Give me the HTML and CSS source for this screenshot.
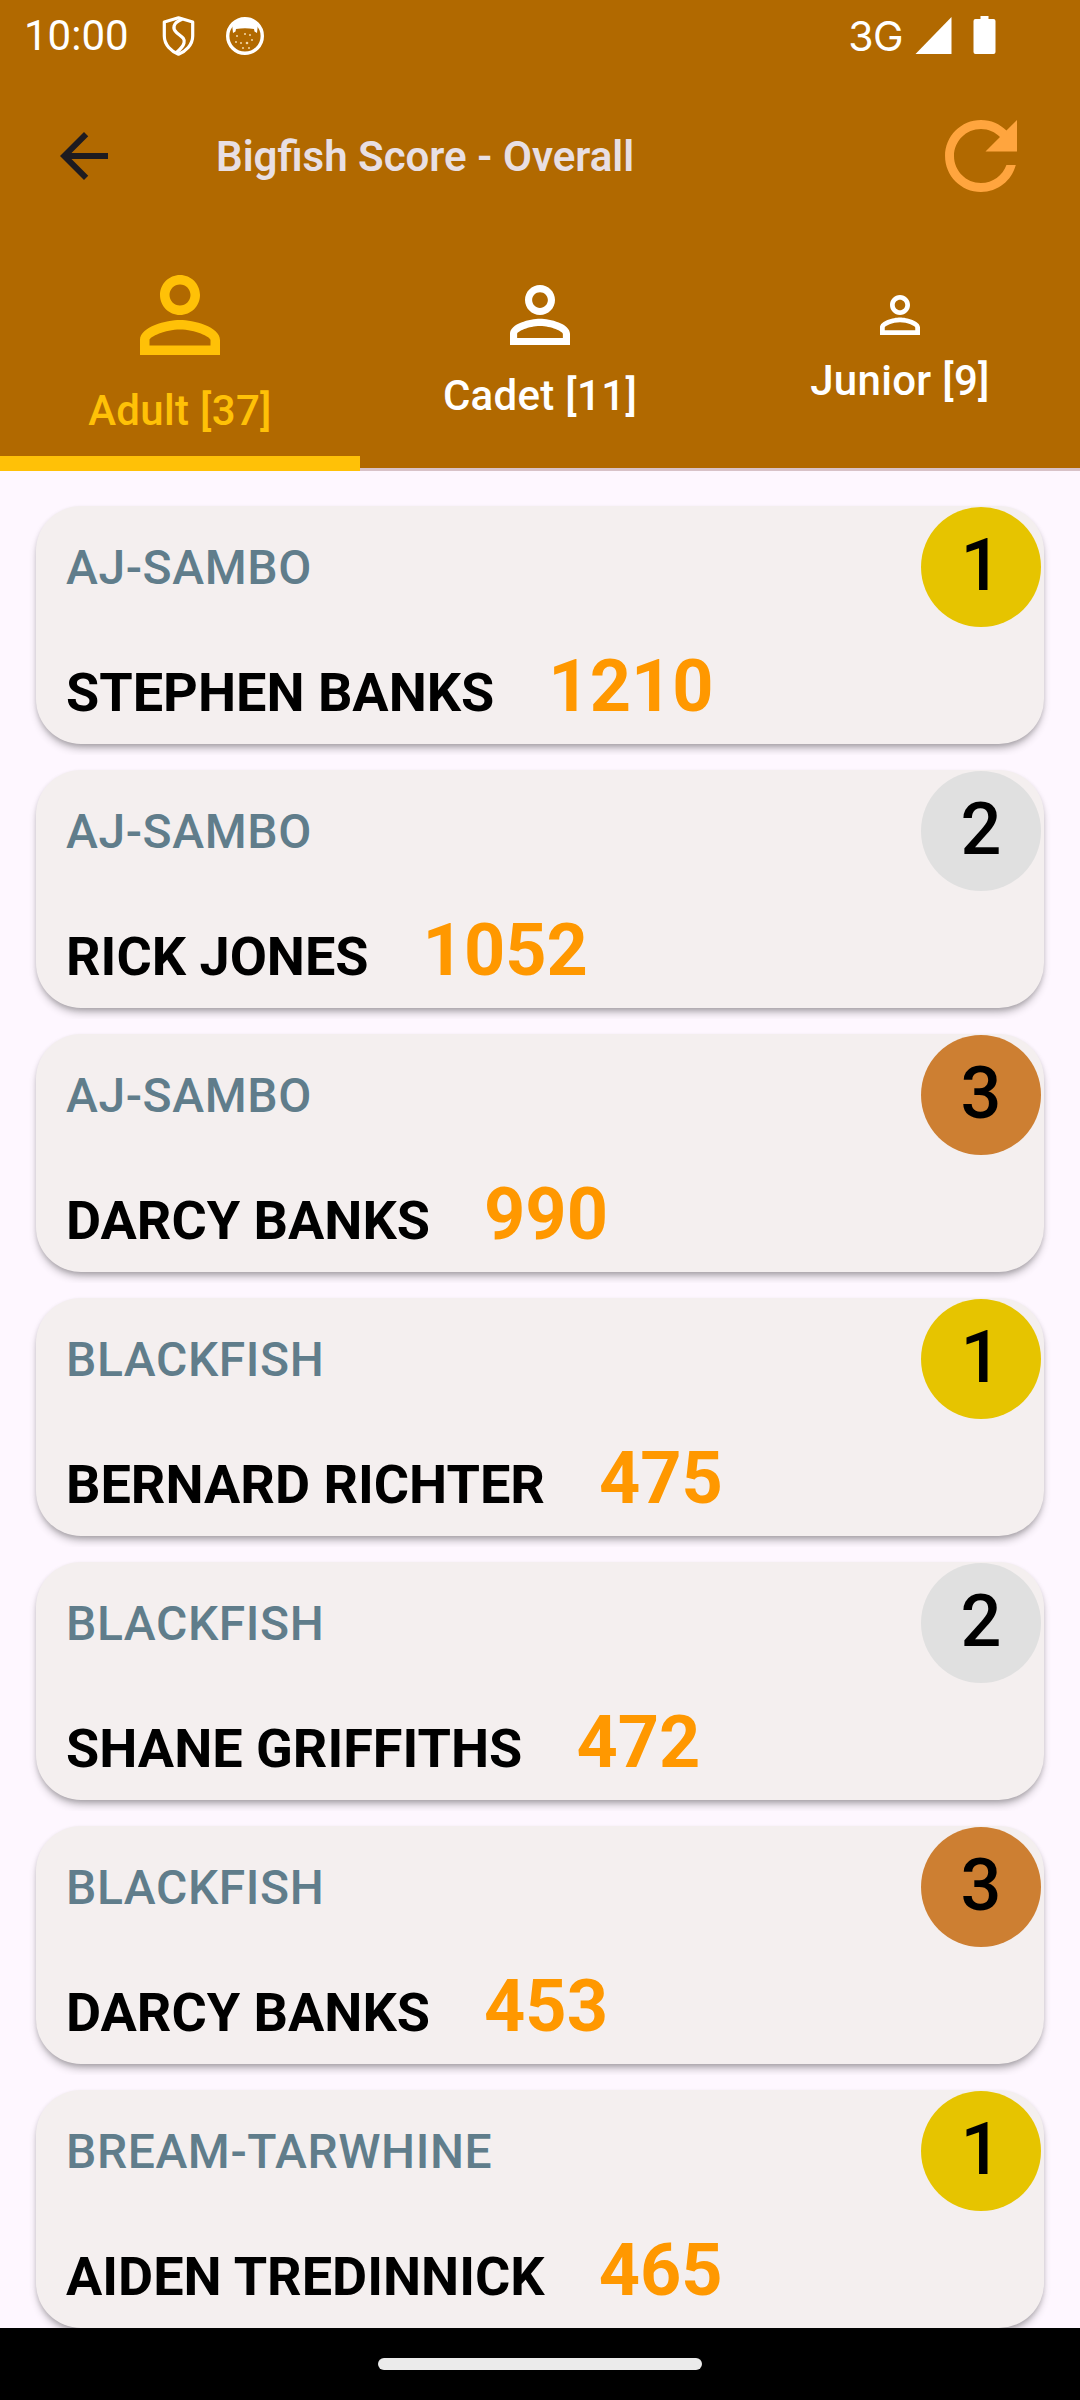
FILE: index.html
```html
<!DOCTYPE html>
<html lang="en">
<head>
<meta charset="utf-8">
<title>Bigfish Score - Overall</title>
<link rel="stylesheet" href="styles.css">
</head>
<body>
<div class="app">
  <header class="header">
    <div class="status-bar">
      <span class="clock">10:00</span>
      <svg class="ic-shield" viewBox="0 0 32 40"><path d="M16 1.8 L30.2 6 V20 C30.2 29 23 35.5 16 38.2 C9 35.5 1.8 29 1.8 20 V6 Z" fill="none" stroke="#fff" stroke-width="3.2" stroke-linejoin="round"/><path d="M19 3.5 C10 7 10 13 14 16.5 C18 20 23 22 21.5 27 C20.5 31 17 34 14 36.5" fill="none" stroke="#fff" stroke-width="3.2" stroke-linecap="round"/></svg>
      <svg class="ic-cat" viewBox="0 0 38 38"><circle cx="19" cy="19" r="17.3" fill="none" stroke="#fff" stroke-width="3.4"/><path d="M6 7 C10 1 28 1 32 7 L31 16 L28.5 14.5 L28 12 C22 11 16 11 10 12 L9.5 14.5 L7 16 Z" fill="#fff"/><g fill="#f3d9a8"><circle cx="11" cy="19" r="1"/><circle cx="19" cy="17" r="1"/><circle cx="24" cy="18" r="1"/><circle cx="10" cy="25" r="1"/><circle cx="15" cy="26" r="1"/><circle cx="21" cy="26" r="1.3"/><circle cx="26" cy="23" r="1"/><circle cx="17" cy="31" r="1"/><circle cx="23" cy="31" r="1"/></g></svg>
      <span class="status-spacer"></span>
      <span class="net">3G</span>
      <svg class="ic-signal" viewBox="0 0 36 37"><path d="M36 0V37H0Z" fill="#fff"/></svg>
      <svg class="ic-battery" viewBox="0 0 22 38"><path d="M7 0H15V3H20A2 2 0 0 1 22 5V36A2 2 0 0 1 20 38H2A2 2 0 0 1 0 36V5A2 2 0 0 1 2 3H7Z" fill="#fff"/></svg>
    </div>
    <div class="app-bar">
      <svg class="ic-back" viewBox="0 0 24 24"><path d="M20 11H7.83l5.59-5.59L12 4l-8 8 8 8 1.41-1.41L7.83 13H20v-2z"/></svg>
      <h1 class="title">Bigfish Score - Overall</h1>
      <svg class="ic-refresh" viewBox="0 0 24 24"><path d="M17.65 6.35C16.2 4.9 14.21 4 12 4c-4.42 0-7.99 3.58-7.99 8s3.57 8 7.99 8c3.73 0 6.84-2.55 7.73-6h-2.08c-.82 2.33-3.04 4-5.65 4-3.31 0-6-2.69-6-6s2.69-6 6-6c1.66 0 3.14.69 4.22 1.78L13 11h7V4l-2.35 2.35z"/></svg>
    </div>
    <nav class="tabs">
      <div class="tab tab-active">
        <svg class="ic-person size-l" viewBox="0 0 24 24"><path d="M12 5.9c1.16 0 2.1.94 2.1 2.1s-.94 2.1-2.1 2.1S9.9 9.16 9.9 8s.94-2.1 2.1-2.1m0 9c2.97 0 6.1 1.46 6.1 2.1v1.1H5.9V17c0-.64 3.13-2.1 6.1-2.1M12 4C9.79 4 8 5.79 8 8s1.79 4 4 4 4-1.79 4-4-1.79-4-4-4zm0 9c-2.67 0-8 1.34-8 4v3h16v-3c0-2.66-5.33-4-8-4z"/></svg>
        <span class="tab-label">Adult [37]</span>
      </div>
      <div class="tab">
        <svg class="ic-person size-m" viewBox="0 0 24 24"><path d="M12 5.9c1.16 0 2.1.94 2.1 2.1s-.94 2.1-2.1 2.1S9.9 9.16 9.9 8s.94-2.1 2.1-2.1m0 9c2.97 0 6.1 1.46 6.1 2.1v1.1H5.9V17c0-.64 3.13-2.1 6.1-2.1M12 4C9.79 4 8 5.79 8 8s1.79 4 4 4 4-1.79 4-4-1.79-4-4-4zm0 9c-2.67 0-8 1.34-8 4v3h16v-3c0-2.66-5.33-4-8-4z"/></svg>
        <span class="tab-label">Cadet [11]</span>
      </div>
      <div class="tab">
        <svg class="ic-person size-s" viewBox="0 0 24 24"><path d="M12 5.9c1.16 0 2.1.94 2.1 2.1s-.94 2.1-2.1 2.1S9.9 9.16 9.9 8s.94-2.1 2.1-2.1m0 9c2.97 0 6.1 1.46 6.1 2.1v1.1H5.9V17c0-.64 3.13-2.1 6.1-2.1M12 4C9.79 4 8 5.79 8 8s1.79 4 4 4 4-1.79 4-4-1.79-4-4-4zm0 9c-2.67 0-8 1.34-8 4v3h16v-3c0-2.66-5.33-4-8-4z"/></svg>
        <span class="tab-label">Junior [9]</span>
      </div>
      <span class="tab-divider"></span>
      <span class="tab-indicator"></span>
    </nav>
  </header>
  <main class="list">
    <div class="item"><article class="card"><span class="rank gold">1</span><div class="cat">AJ-SAMBO</div><div class="row"><span class="name">STEPHEN BANKS</span><span class="score">1210</span></div></article></div>
    <div class="item"><article class="card"><span class="rank silver">2</span><div class="cat">AJ-SAMBO</div><div class="row"><span class="name">RICK JONES</span><span class="score">1052</span></div></article></div>
    <div class="item"><article class="card"><span class="rank bronze">3</span><div class="cat">AJ-SAMBO</div><div class="row"><span class="name">DARCY BANKS</span><span class="score">990</span></div></article></div>
    <div class="item"><article class="card"><span class="rank gold">1</span><div class="cat">BLACKFISH</div><div class="row"><span class="name">BERNARD RICHTER</span><span class="score">475</span></div></article></div>
    <div class="item"><article class="card"><span class="rank silver">2</span><div class="cat">BLACKFISH</div><div class="row"><span class="name">SHANE GRIFFITHS</span><span class="score">472</span></div></article></div>
    <div class="item"><article class="card"><span class="rank bronze">3</span><div class="cat">BLACKFISH</div><div class="row"><span class="name">DARCY BANKS</span><span class="score">453</span></div></article></div>
    <div class="item"><article class="card"><span class="rank gold">1</span><div class="cat">BREAM-TARWHINE</div><div class="row"><span class="name">AIDEN TREDINNICK</span><span class="score">465</span></div></article></div>
  </main>
  <footer class="nav-bar"><span class="nav-handle"></span></footer>
</div>
</body>
</html>
```

FILE: styles.css
```css
* { box-sizing: border-box; }
html, body { margin: 0; padding: 0; }
body { width: 1080px; height: 2400px; overflow: hidden; font-family: Roboto, "Liberation Sans", sans-serif; background: #fef7ff; }
.app { width: 1080px; height: 2400px; display: flex; flex-direction: column; overflow: hidden; }

.header { background: #b16900; flex: none; }
.status-bar { height: 72px; display: flex; align-items: center; padding: 0 84px 0 24px; color: #fff; }
.clock { font-size: 42px; line-height: 72px; width: 138px; }
.ic-shield { width: 33px; height: 40px; }
.ic-cat { width: 38px; height: 38px; margin-left: 31px; }
.status-spacer { flex: 1; }
.net { font-family: Inter, Roboto, sans-serif; font-size: 41px; line-height: 72px; letter-spacing: -.6px; margin-right: 12px; }
.ic-signal { width: 37px; height: 37px; margin-top: -1px; }
.ic-battery { width: 23px; height: 38px; margin-left: 21px; margin-top: -2px; }

.app-bar { height: 168px; display: flex; align-items: center; padding: 0 45px 0 48px; }
.ic-back { width: 72px; height: 72px; fill: #1d1b20; flex: none; }
.title { flex: 1; margin: 1px 0 0 96px; font-size: 42px; font-weight: 600; color: #e8dfe3; line-height: 60px; }
.ic-refresh { width: 108px; height: 108px; fill: #ffa53e; flex: none; }

.tabs { position: relative; height: 231px; display: grid; grid-template-columns: repeat(3, 360px); padding-bottom: 21px; }
.tab { display: flex; flex-direction: column; align-items: center; justify-content: center; color: #fff; }
.tab-active { color: #ffc107; }
.ic-person { fill: currentColor; display: block; }
.size-l { width: 120px; height: 120px; }
.size-m { width: 90px; height: 90px; }
.size-s { width: 60px; height: 60px; }
.tab-label { font-size: 42px; font-weight: 500; letter-spacing: .3px; line-height: 48px; margin-top: 12px; }
.tab-divider { position: absolute; left: 0; right: 0; bottom: 0; height: 3px; background: #d8c2c8; }
.tab-indicator { position: absolute; left: 0; bottom: 0; width: 360px; height: 15px; background: #ffc107; }

.list { flex: 1; min-height: 0; overflow: hidden; padding-top: 24px; display: flex; flex-direction: column; gap: 4px; }
.item { flex: none; height: 260px; margin: 0 24px; padding: 11px 12px; overflow: hidden; }
.card { position: relative; height: 238px; background: #f4efef; border-radius: 45px; padding: 0 30px; box-shadow: 0 6px 9px -2px rgba(0,0,0,.3), 0 2px 4px rgba(0,0,0,.1); }
.cat { font-size: 48px; font-weight: 500; letter-spacing: .6px; color: #607d8b; line-height: 52px; padding-top: 36px; height: 88px; }
.row { display: flex; align-items: baseline; gap: 54px; padding-top: 51px; }
.name { font-size: 54px; font-weight: 700; color: #000; line-height: 72px; }
.score { font-size: 72px; font-weight: 700; color: #ff9800; line-height: 84px; }
.rank { position: absolute; top: 1px; right: 3px; width: 120px; height: 120px; border-radius: 50%; display: flex; align-items: center; justify-content: center; padding-bottom: 4px; font-size: 72px; font-weight: 500; color: #000; }
.gold { background: #e6c400; }
.silver { background: #e0e0e0; }
.bronze { background: #cd7f32; }

.nav-bar { flex: none; height: 72px; background: #000; display: flex; justify-content: center; padding-top: 30px; }
.nav-handle { width: 324px; height: 12px; border-radius: 6px; background: #ebebeb; }
```
